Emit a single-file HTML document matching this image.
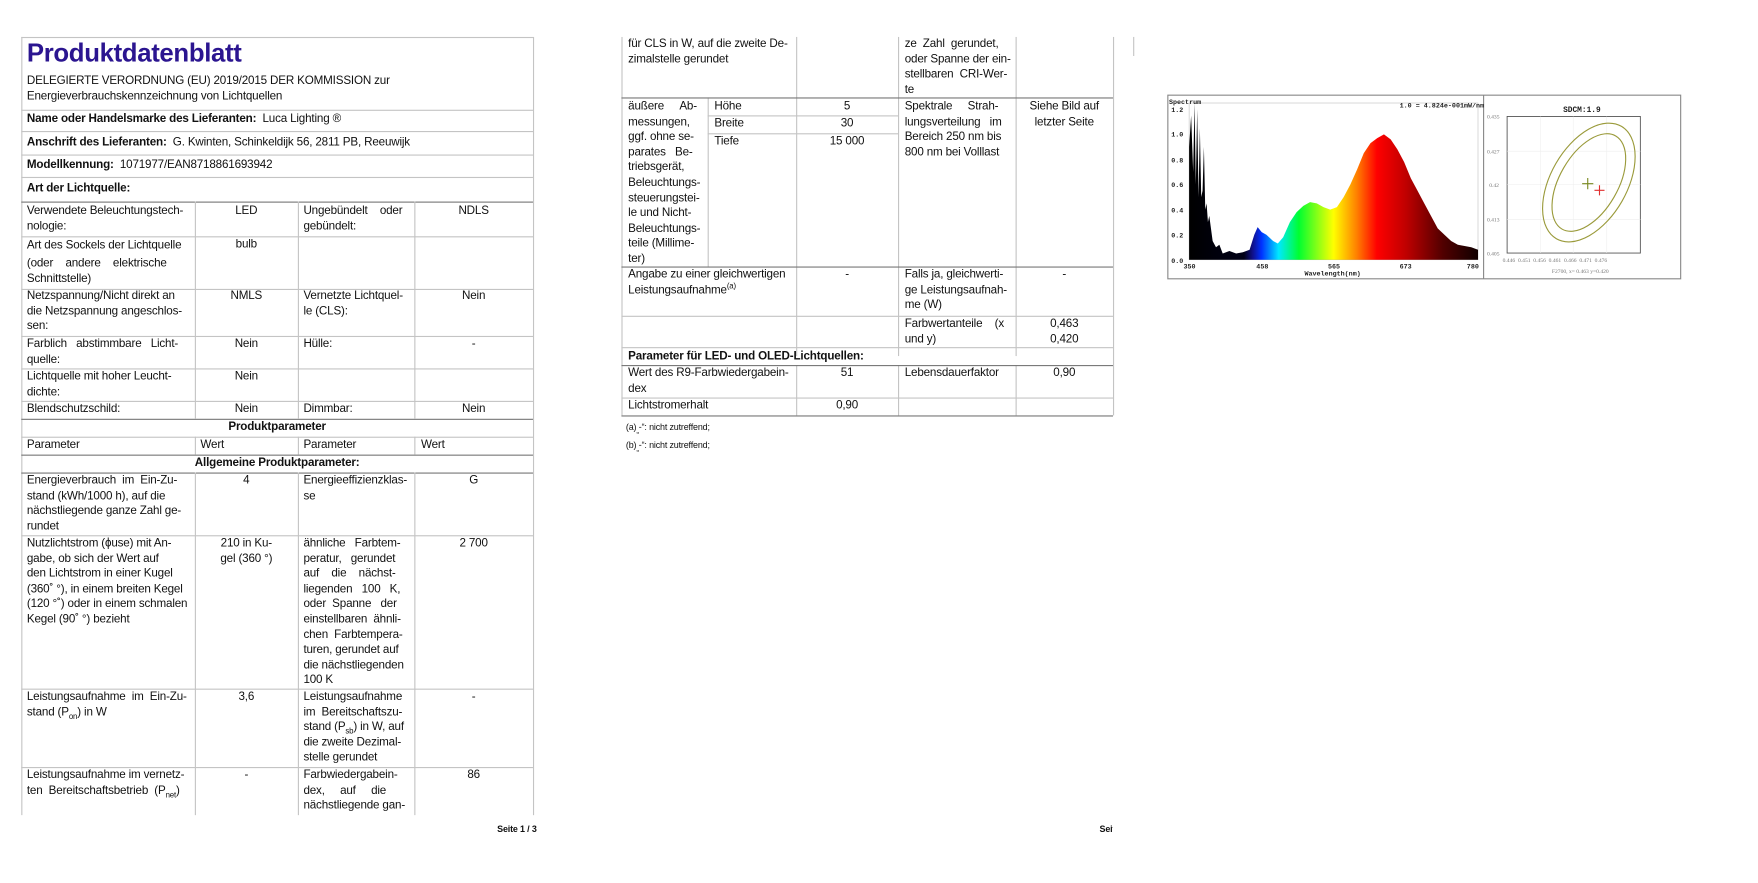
<!DOCTYPE html>
<html><head><meta charset="utf-8">
<style>
body{margin:0;width:1758px;height:883px;background:#fff;position:relative;overflow:hidden;font-family:"Liberation Sans",sans-serif;color:#111}
#w{position:absolute;left:0;top:0;width:1570px;height:789px;transform:scale(1.1197);transform-origin:0 0}
.t{position:absolute;font-size:10.4px;line-height:13.6px;white-space:nowrap;letter-spacing:-0.15px}
.b{font-weight:bold}
.c{text-align:center}
.h{position:absolute;height:0;border-top:1px solid #c4c4c4}
.hd{position:absolute;height:0;border-top:1.5px solid #777}
.v{position:absolute;width:0;border-left:1px solid #c4c4c4}
sub,sup{font-size:7px;line-height:0}
</style></head><body><div id="w">

<!-- PAGE 1 -->
<div class="v" style="left:19px;top:33px;height:695px"></div>
<div class="v" style="left:476px;top:33px;height:695px"></div>
<div class="h" style="left:19px;top:33px;width:457px"></div>
<div class="h" style="left:19px;top:98px;width:457px"></div>
<div class="h" style="left:19px;top:117px;width:457px"></div>
<div class="h" style="left:19px;top:138px;width:457px"></div>
<div class="h" style="left:19px;top:158px;width:457px"></div>
<div class="hd" style="left:19px;top:180px;width:457px"></div>
<div class="h" style="left:19px;top:211px;width:457px"></div>
<div class="h" style="left:19px;top:258px;width:457px"></div>
<div class="h" style="left:19px;top:300px;width:457px"></div>
<div class="h" style="left:19px;top:329px;width:457px"></div>
<div class="h" style="left:19px;top:358px;width:457px"></div>
<div class="hd" style="left:19px;top:374px;width:457px"></div>
<div class="h" style="left:19px;top:390px;width:457px"></div>
<div class="hd" style="left:19px;top:406px;width:457px"></div>
<div class="hd" style="left:19px;top:422px;width:457px"></div>
<div class="h" style="left:19px;top:478px;width:457px"></div>
<div class="h" style="left:19px;top:615px;width:457px"></div>
<div class="h" style="left:19px;top:685px;width:457px"></div>
<div class="v" style="left:174px;top:180px;height:194px"></div>
<div class="v" style="left:266px;top:180px;height:194px"></div>
<div class="v" style="left:370px;top:180px;height:194px"></div>
<div class="v" style="left:174px;top:390px;height:16px"></div>
<div class="v" style="left:266px;top:390px;height:16px"></div>
<div class="v" style="left:370px;top:390px;height:16px"></div>
<div class="v" style="left:174px;top:422px;height:306px"></div>
<div class="v" style="left:266px;top:422px;height:306px"></div>
<div class="v" style="left:370px;top:422px;height:306px"></div>

<div class="t b" style="left:24px;top:33px;font-size:23px;line-height:28px;color:#2b1590;letter-spacing:-0.3px">Produktdatenblatt</div>
<div class="t" style="left:24px;top:66px">DELEGIERTE VERORDNUNG (EU) 2019/2015 DER KOMMISSION zur<br>Energieverbrauchskennzeichnung von Lichtquellen</div>
<div class="t" style="left:24px;top:100px"><b>Name oder Handelsmarke des Lieferanten:</b>&nbsp; Luca Lighting ®</div>
<div class="t" style="left:24px;top:121px"><b>Anschrift des Lieferanten:</b>&nbsp; G. Kwinten, Schinkeldijk 56, 2811 PB, Reeuwijk</div>
<div class="t" style="left:24px;top:141px"><b>Modellkennung:</b>&nbsp; 1071977/EAN8718861693942</div>
<div class="t b" style="left:24px;top:162px">Art der Lichtquelle:</div>

<div class="t" style="left:24px;top:182px">Verwendete Beleuchtungstech-<br>nologie:</div>
<div class="t c" style="left:174px;width:92px;top:182px">LED</div>
<div class="t" style="left:271px;top:182px">Ungebündelt &nbsp;&nbsp;&nbsp;oder<br>gebündelt:</div>
<div class="t c" style="left:370px;width:106px;top:182px">NDLS</div>

<div class="t" style="left:24px;top:212px;line-height:16px">Art des Sockels der Lichtquelle<br>(oder &nbsp;&nbsp;&nbsp;andere &nbsp;&nbsp;&nbsp;elektrische</div>
<div class="t" style="left:24px;top:243px">Schnittstelle)</div>
<div class="t c" style="left:174px;width:92px;top:212px">bulb</div>

<div class="t" style="left:24px;top:258px">Netzspannung/Nicht direkt an<br>die Netzspannung angeschlos-<br>sen:</div>
<div class="t c" style="left:174px;width:92px;top:258px">NMLS</div>
<div class="t" style="left:271px;top:258px">Vernetzte Lichtquel-<br>le (CLS):</div>
<div class="t c" style="left:370px;width:106px;top:258px">Nein</div>

<div class="t" style="left:24px;top:301px">Farblich &nbsp;&nbsp;abstimmbare &nbsp;&nbsp;Licht-<br>quelle:</div>
<div class="t c" style="left:174px;width:92px;top:301px">Nein</div>
<div class="t" style="left:271px;top:301px">Hülle:</div>
<div class="t c" style="left:370px;width:106px;top:301px">-</div>

<div class="t" style="left:24px;top:330px">Lichtquelle mit hoher Leucht-<br>dichte:</div>
<div class="t c" style="left:174px;width:92px;top:330px">Nein</div>

<div class="t" style="left:24px;top:359px">Blendschutzschild:</div>
<div class="t c" style="left:174px;width:92px;top:359px">Nein</div>
<div class="t" style="left:271px;top:359px">Dimmbar:</div>
<div class="t c" style="left:370px;width:106px;top:359px">Nein</div>

<div class="t b c" style="left:19px;width:457px;top:375px">Produktparameter</div>
<div class="t" style="left:24px;top:391px">Parameter</div>
<div class="t" style="left:179px;top:391px">Wert</div>
<div class="t" style="left:271px;top:391px">Parameter</div>
<div class="t" style="left:376px;top:391px">Wert</div>
<div class="t b c" style="left:19px;width:457px;top:407px">Allgemeine Produktparameter:</div>

<div class="t" style="left:24px;top:423px">Energieverbrauch &nbsp;im &nbsp;Ein-Zu-<br>stand (kWh/1000 h), auf die<br>nächstliegende ganze Zahl ge-<br>rundet</div>
<div class="t c" style="left:174px;width:92px;top:423px">4</div>
<div class="t" style="left:271px;top:423px">Energieeffizienzklas-<br>se</div>
<div class="t c" style="left:370px;width:106px;top:423px">G</div>

<div class="t" style="left:24px;top:479px">Nutzlichtstrom (ϕuse) mit An-<br>gabe, ob sich der Wert auf<br>den Lichtstrom in einer Kugel<br>(360˚ °), in einem breiten Kegel<br>(120 °˚) oder in einem schmalen<br>Kegel (90˚ °) bezieht</div>
<div class="t c" style="left:174px;width:92px;top:479px">210 in Ku-<br>gel (360 °)</div>
<div class="t" style="left:271px;top:479px">ähnliche &nbsp;&nbsp;Farbtem-<br>peratur, &nbsp;&nbsp;gerundet<br>auf &nbsp;&nbsp;&nbsp;die &nbsp;&nbsp;&nbsp;nächst-<br>liegenden &nbsp;&nbsp;100 &nbsp;&nbsp;K,<br>oder &nbsp;Spanne &nbsp;&nbsp;der<br>einstellbaren &nbsp;ähnli-<br>chen &nbsp;Farbtempera-<br>turen, gerundet auf<br>die nächstliegenden<br>100 K</div>
<div class="t c" style="left:370px;width:106px;top:479px">2 700</div>

<div class="t" style="left:24px;top:616px">Leistungsaufnahme &nbsp;im &nbsp;Ein-Zu-<br>stand (P<sub>on</sub>) in W</div>
<div class="t c" style="left:174px;width:92px;top:616px">3,6</div>
<div class="t" style="left:271px;top:616px">Leistungsaufnahme<br>im &nbsp;Bereitschaftszu-<br>stand (P<sub>sb</sub>) in W, auf<br>die zweite Dezimal-<br>stelle gerundet</div>
<div class="t c" style="left:370px;width:106px;top:616px">-</div>

<div class="t" style="left:24px;top:686px">Leistungsaufnahme im vernetz-<br>ten &nbsp;Bereitschaftsbetrieb &nbsp;(P<sub>net</sub>)</div>
<div class="t c" style="left:174px;width:92px;top:686px">-</div>
<div class="t" style="left:271px;top:686px">Farbwiedergabein-<br>dex, &nbsp;&nbsp;&nbsp;&nbsp;auf &nbsp;&nbsp;&nbsp;&nbsp;die<br>nächstliegende gan-</div>
<div class="t c" style="left:370px;width:106px;top:686px">86</div>
<div class="t b" style="left:444px;top:734px;font-size:8px">Seite 1 / 3</div>

<!-- PAGE 2 -->
<div class="v" style="left:555px;top:33px;height:338px"></div>
<div class="v" style="left:994px;top:33px;height:338px"></div>
<div class="v" style="left:711px;top:33px;height:285px"></div>
<div class="v" style="left:802px;top:33px;height:285px"></div>
<div class="v" style="left:907px;top:33px;height:285px"></div>
<div class="v" style="left:711px;top:326px;height:45px"></div>
<div class="v" style="left:802px;top:326px;height:45px"></div>
<div class="v" style="left:907px;top:326px;height:45px"></div>
<div class="v" style="left:632px;top:87px;height:151px"></div>
<div class="v" style="left:1012px;top:33px;height:17px"></div>
<div class="hd" style="left:555px;top:87px;width:439px"></div>
<div class="h" style="left:632px;top:103px;width:170px"></div>
<div class="h" style="left:632px;top:119px;width:170px"></div>
<div class="hd" style="left:555px;top:238px;width:439px"></div>
<div class="h" style="left:555px;top:282px;width:439px"></div>
<div class="h" style="left:555px;top:310px;width:439px"></div>
<div class="hd" style="left:555px;top:326px;width:439px"></div>
<div class="h" style="left:555px;top:355px;width:439px"></div>
<div class="hd" style="left:555px;top:371px;width:439px"></div>

<div class="t" style="left:561px;top:33px">für CLS in W, auf die zweite De-<br>zimalstelle gerundet</div>
<div class="t" style="left:808px;top:33px">ze &nbsp;Zahl &nbsp;gerundet,<br>oder Spanne der ein-<br>stellbaren &nbsp;CRI-Wer-<br>te</div>
<div class="t" style="left:561px;top:89px">äußere &nbsp;&nbsp;&nbsp;&nbsp;Ab-<br>messungen,<br>ggf. ohne se-<br>parates &nbsp;&nbsp;Be-<br>triebsgerät,<br>Beleuchtungs-<br>steuerungstei-<br>le und Nicht-<br>Beleuchtungs-<br>teile (Millime-<br>ter)</div>
<div class="t" style="left:638px;top:89px">Höhe</div>
<div class="t" style="left:638px;top:104px">Breite</div>
<div class="t" style="left:638px;top:120px">Tiefe</div>
<div class="t c" style="left:711px;width:91px;top:89px">5</div>
<div class="t c" style="left:711px;width:91px;top:104px">30</div>
<div class="t c" style="left:711px;width:91px;top:120px">15 000</div>
<div class="t" style="left:808px;top:89px">Spektrale &nbsp;&nbsp;&nbsp;&nbsp;Strah-<br>lungsverteilung &nbsp;&nbsp;im<br>Bereich 250 nm bis<br>800 nm bei Volllast</div>
<div class="t c" style="left:907px;width:87px;top:89px">Siehe Bild auf<br>letzter Seite</div>

<div class="t" style="left:561px;top:239px">Angabe zu einer gleichwertigen<br>Leistungsaufnahme<sup>(a)</sup></div>
<div class="t c" style="left:711px;width:91px;top:239px">-</div>
<div class="t" style="left:808px;top:239px">Falls ja, gleichwerti-<br>ge Leistungsaufnah-<br>me (W)</div>
<div class="t c" style="left:907px;width:87px;top:239px">-</div>
<div class="t" style="left:808px;top:283px">Farbwertanteile &nbsp;&nbsp;&nbsp;(x<br>und y)</div>
<div class="t c" style="left:907px;width:87px;top:283px">0,463<br>0,420</div>
<div class="t b" style="left:561px;top:312px">Parameter für LED- und OLED-Lichtquellen:</div>
<div class="t" style="left:561px;top:327px">Wert des R9-Farbwiedergabein-<br>dex</div>
<div class="t c" style="left:711px;width:91px;top:327px">51</div>
<div class="t" style="left:808px;top:327px">Lebensdauerfaktor</div>
<div class="t c" style="left:907px;width:87px;top:327px">0,90</div>
<div class="t" style="left:561px;top:356px">Lichtstromerhalt</div>
<div class="t c" style="left:711px;width:91px;top:356px">0,90</div>
<div class="t" style="left:559px;top:375px;font-size:8px">(a)<sub>„</sub>-“: nicht zutreffend;</div>
<div class="t" style="left:559px;top:391px;font-size:8px">(b)<sub>„</sub>-“: nicht zutreffend;</div>
<div class="t b" style="left:982px;top:734px;font-size:8px;width:12px;overflow:hidden">Seite</div>

<!-- PAGE 3 chart -->
<svg style="position:absolute;left:0;top:0" width="1570" height="789">
<defs>
<linearGradient id="sp" x1="0" x2="1" y1="0" y2="0">
<stop offset="0" stop-color="#000"/><stop offset="0.19" stop-color="#000018"/>
<stop offset="0.22" stop-color="#10108a"/><stop offset="0.25" stop-color="#0030ff"/>
<stop offset="0.31" stop-color="#00e8ff"/><stop offset="0.38" stop-color="#00ff30"/>
<stop offset="0.5" stop-color="#ffff00"/><stop offset="0.58" stop-color="#ff8000"/>
<stop offset="0.65" stop-color="#ff0000"/><stop offset="0.75" stop-color="#c00000"/>
<stop offset="0.88" stop-color="#500000"/><stop offset="1" stop-color="#100000"/>
</linearGradient></defs>
<rect x="1043" y="85" width="458" height="164" fill="#fff" stroke="#888" stroke-width="1"/>
<line x1="1325" y1="85" x2="1325" y2="249" stroke="#888"/>
<rect x="1062" y="92" width="258" height="140" fill="none" stroke="#bbb" stroke-width="0.5"/>
<g transform="translate(1062,232) scale(0.6,-112)">
<polygon fill="url(#sp)" points="0,0 0,0.9 3,1.15 6,0.7 8,1.25 10,0.6 12,1.2 14,0.5 16,1.05 18,0.5 20,0.55 22,0.9 24,0.4 26,0.45 28,0.3 30,0.35 35,0.15 40,0.1 45,0.12 50,0.05 60,0.07 70,0.05 80,0.06 90,0.08 97,0.2 102,0.26 108,0.22 115,0.2 125,0.15 132,0.13 140,0.18 150,0.3 160,0.38 170,0.43 180,0.46 190,0.45 200,0.42 210,0.4 220,0.42 230,0.5 240,0.6 250,0.72 260,0.85 270,0.93 280,0.97 290,1.0 300,0.96 310,0.88 320,0.78 330,0.65 340,0.55 350,0.45 360,0.35 370,0.25 380,0.2 390,0.15 400,0.12 410,0.11 420,0.1 430,0.08 430,0"/>
</g>
<g font-family="Liberation Mono,monospace" font-size="6" font-weight="bold" fill="#222">
<text x="1044" y="93">Spectrum</text>
<text x="1046" y="100">1.2</text><text x="1046" y="122">1.0</text><text x="1046" y="145">0.8</text>
<text x="1046" y="167">0.6</text><text x="1046" y="190">0.4</text><text x="1046" y="212">0.2</text><text x="1046" y="235">0.0</text>
<text x="1057" y="240">350</text><text x="1122" y="240">458</text><text x="1186" y="240">565</text><text x="1250" y="240">673</text><text x="1310" y="240">780</text>
<text x="1165" y="246">Wavelength(nm)</text>
<text x="1250" y="96">1.0 = 4.824e-001mW/nm</text>
<text x="1396" y="100" font-size="7">SDCM:1.9</text>
</g>
<rect x="1346" y="104" width="119" height="122" fill="none" stroke="#555" stroke-width="0.8"/>
<g stroke="#eee" stroke-width="0.5">
<line x1="1346" y1="135" x2="1465" y2="135"/><line x1="1346" y1="165" x2="1465" y2="165"/><line x1="1346" y1="196" x2="1465" y2="196"/>
<line x1="1376" y1="104" x2="1376" y2="226"/><line x1="1405" y1="104" x2="1405" y2="226"/><line x1="1435" y1="104" x2="1435" y2="226"/>
</g>
<g fill="none" stroke="#9a9a3a" stroke-width="1">
<ellipse cx="1419" cy="163" rx="34" ry="58" transform="rotate(30 1419 163)"/>
<ellipse cx="1419" cy="163" rx="26" ry="48" transform="rotate(30 1419 163)"/>
</g>
<path d="M1413 164h10M1418 159v10" stroke="#7a8a20" stroke-width="1"/>
<path d="M1424 170h9M1428.5 165.5v9" stroke="#e03030" stroke-width="1"/>
<g font-family="Liberation Serif,serif" font-size="5" fill="#777">
<text x="1328" y="106">0.435</text><text x="1328" y="137">0.427</text><text x="1330" y="167">0.42</text>
<text x="1328" y="198">0.413</text><text x="1328" y="228">0.405</text>
<text x="1342" y="234">0.446 &#160;0.451 &#160;0.456 &#160;0.461 &#160;0.466 &#160;0.471 &#160;0.476</text>
<text x="1386" y="244">F2700, x= 0.463 y=0.420</text>
</g>
</svg>
</div></body></html>
